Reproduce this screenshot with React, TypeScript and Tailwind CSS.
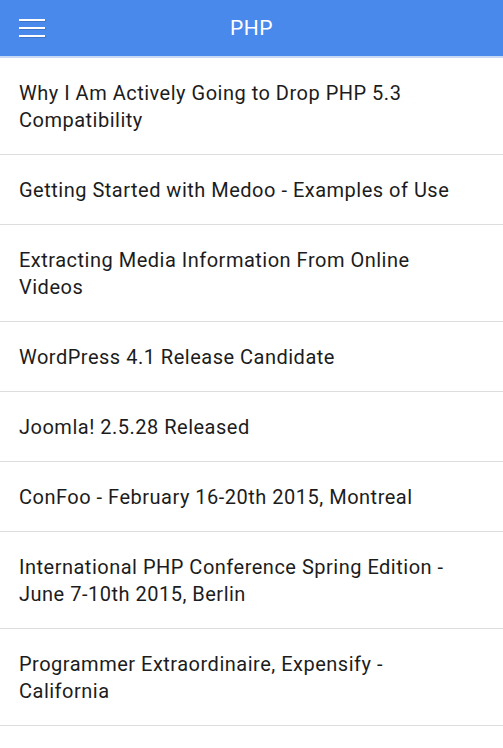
const posts = [
  'Why I Am Actively Going to Drop PHP 5.3 Compatibility',
  'Getting Started with Medoo - Examples of Use',
  'Extracting Media Information From Online Videos',
  'WordPress 4.1 Release Candidate',
  'Joomla! 2.5.28 Released',
  'ConFoo - February 16-20th 2015, Montreal',
  'International PHP Conference Spring Edition - June 7-10th 2015, Berlin',
  'Programmer Extraordinaire, Expensify - California',
]

export default function App() {
  return (
    <div className="min-h-[748px] w-full bg-white font-['Roboto',sans-serif]">
      <header className="relative flex h-[58px] items-center justify-center border-b-2 border-[#c9d9f3] bg-[#4a89ec]">
        <button type="button" className="absolute left-[19px] top-[19px] flex flex-col gap-[6px]">
          <span className="block h-[2px] w-[26px] bg-white shadow-[1px_1px_0_rgba(0,0,0,0.15)]" />
          <span className="block h-[2px] w-[26px] bg-white shadow-[1px_1px_0_rgba(0,0,0,0.15)]" />
          <span className="block h-[2px] w-[26px] bg-white shadow-[1px_1px_0_rgba(0,0,0,0.15)]" />
        </button>
        <h1 className="text-[21px] leading-none tracking-[0.5px] text-white">PHP</h1>
      </header>

      <ul>
        {posts.map((title) => (
          <li key={title} className="border-b border-[#dddddd] pl-[19px] pr-[40px] pt-[22px] pb-[20px]">
            <a href="#" className="block text-[20px] leading-[27px] tracking-[0.5px] text-[#1c1c1c]">
              {title}
            </a>
          </li>
        ))}
      </ul>
    </div>
  )
}
